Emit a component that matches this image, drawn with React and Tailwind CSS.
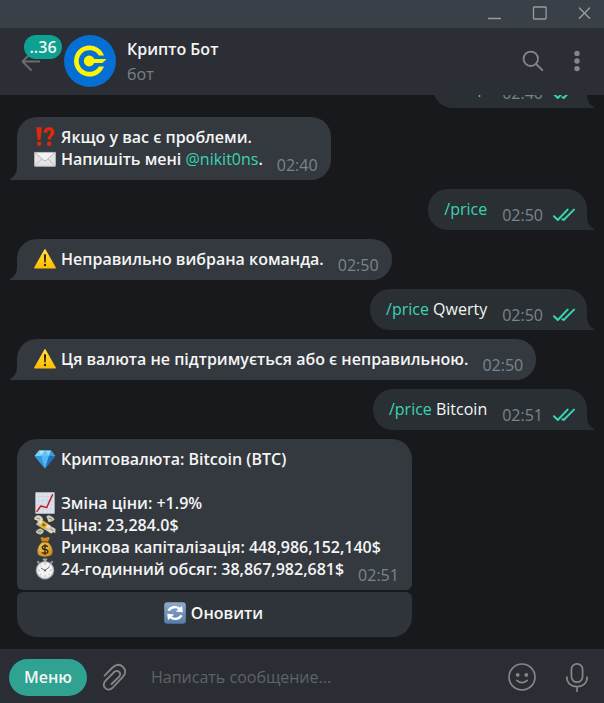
import React from "react";

function EmojiSvg({ children, label }) {
  return (
    <svg viewBox="0 0 22 22" role="img" aria-label={label} className="size-[22px] shrink-0">
      {children}
    </svg>
  );
}

function Interrobang() {
  return (
    <EmojiSvg label="!?">
      <g fill="#e0280c">
        <path d="M2.2 1.2 H7.8 L6.6 13.8 H3.6 Z" />
        <circle cx="5.1" cy="17.8" r="2.2" />
        <path d="M9.6 6.4 C9.8 3 12 1.2 15 1.2 C18.4 1.2 20.4 3.2 20.4 6.2 C20.4 9.8 17 10 16.8 13.6 H13.6 C13.6 9.6 16.7 9.2 16.7 6.3 C16.7 5 16 4.2 15 4.2 C14 4.2 13.3 5 13.2 7 Z" />
        <circle cx="15.2" cy="17.8" r="2.2" />
      </g>
    </EmojiSvg>
  );
}

function Envelope() {
  return (
    <EmojiSvg label="Конверт">
      <rect x="0.3" y="4" width="21.4" height="14.4" rx="0.8" fill="#e4e4e6" />
      <path d="M0.8 18 L8.2 10.6 M21.2 18 L13.8 10.6" stroke="#b4b6b9" strokeWidth="0.9" />
      <path d="M0.7 4.4 L9.6 12.2 Q11 13.3 12.4 12.2 L21.3 4.4 Z" fill="#f2f2f3" stroke="#a6a8ac" strokeWidth="0.8" />
      <path d="M0.5 18.1 H21.5" stroke="#bfc0c3" strokeWidth="0.8" />
    </EmojiSvg>
  );
}

function Warning() {
  return (
    <EmojiSvg label="Увага">
      <defs>
        <linearGradient id="warn" x1="0" y1="0" x2="0" y2="1">
          <stop offset="0" stopColor="#ffdf3e" />
          <stop offset="1" stopColor="#ffbd08" />
        </linearGradient>
      </defs>
      <path d="M11 1.8 L21.2 19.8 H0.8 Z" fill="url(#warn)" stroke="url(#warn)" strokeWidth="1.4" strokeLinejoin="round" />
      <path d="M9.9 6.6 Q11 5.8 12.1 6.6 L11.7 14.2 Q11 14.8 10.3 14.2 Z" fill="#2c2500" />
      <circle cx="11" cy="17" r="1.2" fill="#2c2500" />
    </EmojiSvg>
  );
}

function Gem() {
  return (
    <EmojiSvg label="Діамант">
      <path d="M5 2.4 H17 L21.4 8 L11 20.4 L0.6 8 Z" fill="#3a9fdf" />
      <path d="M5 2.4 L7 8 H0.6 Z" fill="#79d0f6" />
      <path d="M5 2.4 H11 L7 8 Z" fill="#a9e4fb" />
      <path d="M11 2.4 L15 8 H7 Z" fill="#64c3f2" />
      <path d="M11 2.4 H17 L15 8 Z" fill="#90d8f8" />
      <path d="M17 2.4 L21.4 8 H15 Z" fill="#3d99de" />
      <path d="M7 8 H15 L11 20.4 Z" fill="#55b7ee" />
      <path d="M15 8 H21.4 L11 20.4 Z" fill="#1e72bd" />
      <path d="M0.6 8 H7 L11 20.4 Z" fill="#3598df" />
    </EmojiSvg>
  );
}

function Chart() {
  return (
    <EmojiSvg label="Графік">
      <rect x="1.4" y="0.3" width="19.2" height="21.4" fill="#dbe2eb" />
      <path d="M4.8 0.5 V21.5 M8.9 0.5 V21.5 M13 0.5 V21.5 M17.1 0.5 V21.5 M1.5 4.5 H20.5 M1.5 8.7 H20.5 M1.5 12.9 H20.5 M1.5 17.1 H20.5" stroke="#c4cdd9" strokeWidth="0.5" />
      <path d="M3 19.4 L6.8 14 L12.8 15.6 L15.4 9.4 L18.6 2.8" fill="none" stroke="#c4141d" strokeWidth="1.4" strokeLinecap="round" strokeLinejoin="round" />
    </EmojiSvg>
  );
}

function FlyingMoney() {
  return (
    <EmojiSvg label="Гроші">
      <path d="M0.4 3.4 Q3 0.4 6 1.8 Q8.6 2.8 9.2 6.6 L4.4 8.2 Q2.6 5.4 0.4 5.8 Z" fill="#d9d7bf" />
      <path d="M12.4 2.4 Q14.8 0.4 17 2.2 Q19.4 2.6 20.6 5.8 Q18.8 7.8 14.6 8.2 Z" fill="#cccab2" />
      <path d="M7 14.4 Q3.8 14.2 1.6 18 Q3.4 20.6 6.4 20.4 Q9.6 19.4 9.8 16.4 Z" fill="#c4c2aa" />
      <path d="M13.4 13.4 Q17.6 11.4 21.6 15 L21.2 19.4 Q19.4 17.2 17.6 19.4 Q15.6 19.2 12.8 16.4 Z" fill="#d8d6c0" />
      <path d="M5.4 5.2 L17.6 12.2 L14 17.6 L2 10.4 Z" fill="#c8c3a2" />
      <path d="M6.2 6 L16.6 12 L14.8 14.8 L4.4 8.8 Z" fill="#e8e4cb" />
      <path d="M8.8 6.6 L14 9.8 L10.8 15.4 L5.6 12.2 Z" fill="#eab837" />
      <circle cx="9.8" cy="10.8" r="1.6" fill="#826a2b" />
      <path d="M2.4 3.8 L6 5 M15 4 L18.4 5.2 M4 17.6 L7.6 16.8 M16.2 15 L19.6 16.4" stroke="#85866f" strokeWidth="0.9" />
    </EmojiSvg>
  );
}

function MoneyBag() {
  return (
    <EmojiSvg label="Мішок грошей">
      <defs>
        <radialGradient id="bag" cx="0.4" cy="0.35" r="0.7">
          <stop offset="0" stopColor="#f6cc62" />
          <stop offset="1" stopColor="#c8871a" />
        </radialGradient>
      </defs>
      <path d="M6.4 1.6 Q8.4 0.6 11 2 Q13.6 0.4 15.8 1.4 Q15.2 4.6 13.2 6.2 H8.8 Q6.8 4.4 6.4 1.6 Z" fill="#c98a22" />
      <path d="M8.4 6 H13.6 Q18.6 10 18.6 15.6 Q18.8 20.8 11 20.8 Q3.2 20.8 3.4 15.6 Q3.4 10 8.4 6 Z" fill="url(#bag)" />
      <path d="M7.6 5.8 H14.2" stroke="#7a4a12" strokeWidth="1.3" strokeLinecap="round" />
      <path d="M13.8 10.7 Q13 9.7 11 9.7 Q8.3 9.8 8.3 11.6 Q8.4 13.1 11 13.4 Q13.9 13.8 13.9 15.5 Q13.8 17.3 11 17.4 Q8.8 17.4 8 16.2 M11 8.3 V18.8" fill="none" stroke="#3e2b0c" strokeWidth="1.4" />
    </EmojiSvg>
  );
}

function Stopwatch() {
  return (
    <EmojiSvg label="Секундомір">
      <path d="M8.8 0.5 H13.2 V2 H12.4 V4 H9.6 V2 H8.8 Z" fill="#a1a6ac" />
      <path d="M2.6 4 L4.2 2.6 L6 4.6 L4.4 6 Z M19.4 4 L17.8 2.6 L16 4.6 L17.6 6 Z" fill="#8d9298" />
      <circle cx="11" cy="12.2" r="9.2" fill="#a7abb1" />
      <circle cx="11" cy="12.2" r="8" fill="#f2f2f0" />
      <path d="M11 5.3 V7 M11 17.4 V19.1 M4.1 12.2 H5.8 M16.2 12.2 H17.9 M6.1 7.3 L7.2 8.4 M15.9 7.3 L14.8 8.4 M6.1 17.1 L7.2 16 M15.9 17.1 L14.8 16" stroke="#96999e" strokeWidth="0.8" />
      <path d="M11 12.4 L7.2 10.2 M11 12.4 L15.2 9.2" stroke="#55585c" strokeWidth="0.8" strokeLinecap="round" />
      <circle cx="11" cy="12.4" r="1" fill="#55585c" />
    </EmojiSvg>
  );
}

function Refresh() {
  return (
    <EmojiSvg label="Оновлення">
      <defs>
        <linearGradient id="refresh" x1="0" y1="0" x2="0" y2="1">
          <stop offset="0" stopColor="#8fabc9" />
          <stop offset="1" stopColor="#557da6" />
        </linearGradient>
      </defs>
      <rect x="0.2" y="0.2" width="21.6" height="21.6" rx="3.2" fill="url(#refresh)" />
      <path d="M4.4 8.6 A7.2 6.4 0 0 1 15.6 6.8 M17.6 13.4 A7.2 6.4 0 0 1 6.4 15.2" fill="none" stroke="#fff" strokeWidth="2.3" />
      <path d="M18 3.8 L18.8 10.2 L11.8 9.6 Z M4 18.2 L3.2 11.8 L10.2 12.4 Z" fill="#fff" />
    </EmojiSvg>
  );
}

function Tail({ side }) {
  return side === "left" ? (
    <svg viewBox="0 0 8 14" aria-hidden="true" className="absolute bottom-0 -left-[7px] h-[14px] w-2 fill-[#34393f]">
      <path d="M7 0 Q7 10 0 13 V14 H8 V0 Z" />
    </svg>
  ) : (
    <svg viewBox="0 0 8 14" aria-hidden="true" className="absolute -right-[7px] bottom-0 h-[14px] w-2 fill-[#2a2f33]">
      <path d="M1 0 Q1 10 8 13 V14 H0 V0 Z" />
    </svg>
  );
}

function Time({ children }) {
  return <time className="relative top-1.5 font-normal text-[#7b858d]">{children}</time>;
}

function Line({ icon, time, children }) {
  return (
    <p className="flex min-h-[22px] items-center whitespace-nowrap">
      {icon}
      <span className="mr-[14px] ml-[5px]">{children}</span>
      {time && <Time>{time}</Time>}
    </p>
  );
}

function Incoming({ children }) {
  return (
    <li className="relative self-start rounded-[20px] rounded-bl-none bg-[#34393f] pt-[9px] pr-[13px] pb-[10px] pl-[17px] font-semibold">
      {children}
      <Tail side="left" />
    </li>
  );
}

function Outgoing({ command, text, time }) {
  return (
    <li className="relative flex items-center self-end rounded-[20px] rounded-br-none bg-[#2a2f33] pt-[9px] pr-3 pb-[10px] pl-4">
      <span className="mr-[15px]">
        <a href="#command" className="text-[#38d4b4]">{command}</a>
        {text && " " + text}
      </span>
      <Time>{time}</Time>
      <svg viewBox="0 0 22 14" aria-label="Прочитано" role="img" className="relative top-1.5 ml-[10px] h-[14px] w-[22px] fill-none stroke-[#38d4b4] stroke-2">
        <path d="M1 8.2 L4.8 12 L14.6 1.6 M9.4 11.2 L10.6 12 L21 1.6" strokeLinecap="round" strokeLinejoin="round" />
      </svg>
      <Tail side="right" />
    </li>
  );
}

function TitleBar() {
  return (
    <div className="flex h-7 shrink-0 items-start justify-end gap-[27px] bg-[#3a4047] pt-1 pr-3 text-[#989ba0]">
      <button aria-label="Свернуть" className="size-[18px]">
        <svg viewBox="0 0 18 18" className="size-[18px] fill-none stroke-current stroke-[1.5]">
          <path d="M4.6 14.4 H16.4" strokeLinecap="round" />
        </svg>
      </button>
      <button aria-label="Развернуть" className="size-[18px]">
        <svg viewBox="0 0 18 18" className="size-[18px] fill-none stroke-current stroke-[1.3]">
          <rect x="4.5" y="3" width="12.6" height="12" rx="0.8" />
        </svg>
      </button>
      <button aria-label="Закрыть" className="size-[18px]">
        <svg viewBox="0 0 18 18" className="size-[18px] fill-none stroke-current stroke-[1.4]">
          <path d="M5.4 4 L15.6 14.2 M15.6 4 L5.4 14.2" strokeLinecap="round" />
        </svg>
      </button>
    </div>
  );
}

function Avatar() {
  return (
    <svg viewBox="0 0 52 52" role="img" aria-label="Крипто Бот" className="size-[52px] shrink-0">
      <circle cx="26" cy="26" r="26" fill="#066fd3" />
      <path d="M40 20.5 A15.5 15.5 0 1 0 40 31.5 H34.8 A10.8 10.8 0 1 1 34.8 20.5 Z" fill="#fff500" />
      <circle cx="25.2" cy="26" r="5.4" fill="#fff500" />
      <path d="M27 24 H42.6 L38.4 27.9 H27 Z" fill="#fff500" />
    </svg>
  );
}

function Header() {
  return (
    <header className="flex h-[67px] shrink-0 items-center bg-[#2b2f35] pr-[18px] pb-px pl-5">
      <button aria-label="Назад, 36 непрочитанных" className="relative mr-1 h-[52px] w-10">
        <svg viewBox="0 0 20 20" className="mt-[1px] size-5 fill-none stroke-[#6b6b6b] stroke-[1.8]">
          <path d="M20 9.5 H2.5 M11 1 L2.5 9.5 L11 18" strokeLinecap="round" strokeLinejoin="round" />
        </svg>
        <span className="absolute top-0 left-1 flex h-6 w-[38px] items-center justify-center rounded-full bg-[#0da192] font-semibold">..36</span>
      </button>
      <Avatar />
      <div className="ml-[11px] flex-1">
        <h1 className="mb-[3px] font-semibold">Крипто Бот</h1>
        <p className="text-[#7c7f83]">бот</p>
      </div>
      <button aria-label="Поиск" className="mr-6">
        <svg viewBox="0 0 22 22" className="size-[22px] fill-none stroke-[#868686] stroke-[1.8]">
          <circle cx="8.8" cy="8.8" r="7.2" />
          <path d="M14 14 L20.4 20.2" strokeLinecap="round" />
        </svg>
      </button>
      <button aria-label="Меню чата" className="w-[18px]">
        <svg viewBox="0 0 18 22" className="h-[22px] w-[18px] fill-[#868686]">
          <circle cx="9" cy="3.4" r="2.7" />
          <circle cx="9" cy="11" r="2.7" />
          <circle cx="9" cy="18.6" r="2.7" />
        </svg>
      </button>
    </header>
  );
}

function Composer() {
  return (
    <footer className="flex h-[54px] shrink-0 items-center bg-[#2a2e34] pt-[2px] pr-[15px] pl-[9px]">
      <button className="h-[37px] w-[78px] shrink-0 rounded-full bg-[#2fa291] font-semibold">Меню</button>
      <button aria-label="Прикрепить файл" className="ml-[15px] shrink-0">
        <svg viewBox="0 0 26 28" className="h-7 w-[26px] fill-none stroke-[#868686] stroke-[1.8]">
          <path d="M2.6 12.6 L10 5 C14 1 18 1.2 21 4 C24.2 7 23.8 11 20.6 14.2 L10.4 25 C8 27.2 5 27 3.2 25 C1.2 22.8 1.6 19.8 3.6 17.6 L12.2 9 C13.8 7.6 15.8 7.6 17.2 9 C18.6 10.4 18.4 12.4 17 13.8 L9.6 21" strokeLinecap="round" strokeLinejoin="round" />
        </svg>
      </button>
      <input
        type="text"
        aria-label="Сообщение"
        placeholder="Написать сообщение..."
        className="ml-[23px] min-w-0 flex-1 bg-transparent outline-none placeholder:text-[#5f6266]"
      />
      <button aria-label="Эмодзи" className="shrink-0">
        <svg viewBox="0 0 28 28" className="size-7 fill-none stroke-[#868686] stroke-[1.7]">
          <circle cx="14" cy="14" r="13" />
          <path d="M8.8 17.4 Q14 22 19.2 17.4" strokeLinecap="round" />
          <circle cx="9.7" cy="11.9" r="1.9" className="fill-[#868686] stroke-none" />
          <circle cx="18.3" cy="11.9" r="1.9" className="fill-[#868686] stroke-none" />
        </svg>
      </button>
      <button aria-label="Голосовое сообщение" className="ml-[29px] shrink-0">
        <svg viewBox="0 0 24 30" className="h-[30px] w-6 fill-none stroke-[#868686] stroke-[1.7]">
          <rect x="6.4" y="1.8" width="11.2" height="18.4" rx="5.6" />
          <path d="M1.8 15 C1.8 21 6 24.6 12 24.6 C18 24.6 22.2 21 22.2 15 M12 24.6 V29.2" strokeLinecap="round" />
        </svg>
      </button>
    </footer>
  );
}

export default function App() {
  return (
    <div className="flex h-screen flex-col overflow-hidden bg-[#18191c] font-['Open_Sans','Noto_Sans',sans-serif] text-base leading-[22px] text-[#f5f5f5]">
      <TitleBar />
      <Header />
      <main className="flex min-h-0 flex-1 flex-col justify-end overflow-hidden px-[17px] pb-3">
        <ul className="flex flex-col gap-[9px]">
          <Outgoing command="/help" time="02:40" />
          <Incoming>
            <Line icon={<Interrobang />}>Якщо у вас є проблеми.</Line>
            <Line icon={<Envelope />} time="02:40">
              Напишіть мені <a href="#nikit0ns" className="font-normal text-[#38d4b4]">@nikit0ns</a>.
            </Line>
          </Incoming>
          <Outgoing command="/price" time="02:50" />
          <Incoming>
            <Line icon={<Warning />} time="02:50">Неправильно вибрана команда.</Line>
          </Incoming>
          <Outgoing command="/price" text="Qwerty" time="02:50" />
          <Incoming>
            <Line icon={<Warning />} time="02:50">Ця валюта не підтримується або є неправильною.</Line>
          </Incoming>
          <Outgoing command="/price" text="Bitcoin" time="02:51" />
          <li className="flex flex-col gap-[2px] self-start font-semibold">
            <div className="rounded-t-[20px] rounded-b-md bg-[#34393f] pt-[9px] pr-[13px] pb-[10px] pl-[17px]">
              <Line icon={<Gem />}>Криптовалюта: Bitcoin (BTC)</Line>
              <Line />
              <Line icon={<Chart />}>Зміна ціни: +1.9%</Line>
              <Line icon={<FlyingMoney />}>Ціна: 23,284.0$</Line>
              <Line icon={<MoneyBag />}>Ринкова капіталізація: 448,986,152,140$</Line>
              <Line icon={<Stopwatch />} time="02:51">24-годинний обсяг: 38,867,982,681$</Line>
            </div>
            <button className="flex h-[45px] items-center justify-center gap-[5px] rounded-t-md rounded-b-[20px] bg-[#2f343a] pr-[2px] pb-[3px]">
              <Refresh />
              Оновити
            </button>
          </li>
        </ul>
      </main>
      <Composer />
    </div>
  );
}
